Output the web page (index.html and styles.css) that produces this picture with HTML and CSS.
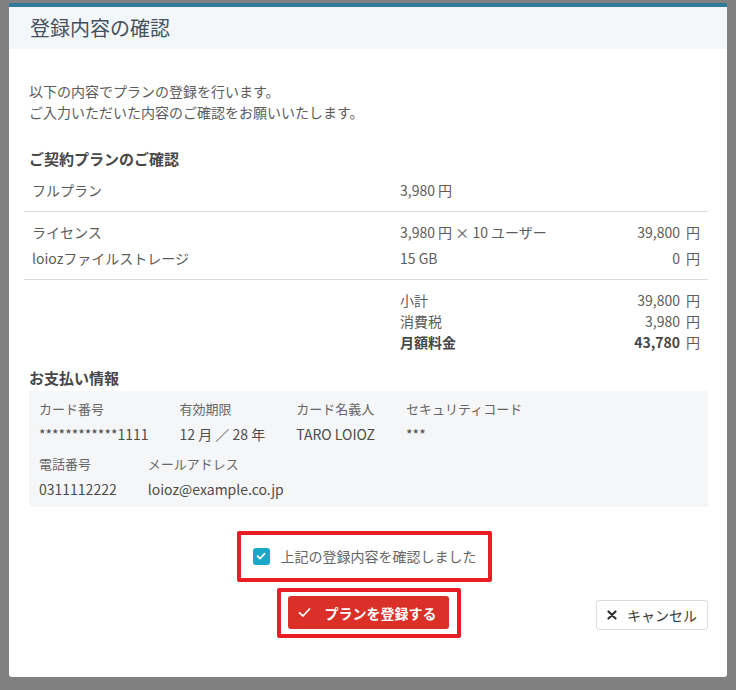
FILE: index.html
```html
<!DOCTYPE html>
<html lang="ja">
<head>
    <meta charset="UTF-8">
    <meta name="viewport" content="width=device-width, initial-scale=1.0">
    <title>登録内容の確認</title>
    <link rel="stylesheet" href="styles.css">
</head>
<body>
    <div class="modal">
        <div class="modal-header">
            <h1 class="modal-title">登録内容の確認</h1>
        </div>
        <div class="modal-body">
            <p class="intro">以下の内容でプランの登録を行います。<br>ご入力いただいた内容のご確認をお願いいたします。</p>

            <h2 class="section-title">ご契約プランのご確認</h2>
            <div class="plan">
                <div class="plan-group">
                    <div class="plan-row"><span>フルプラン</span><span>3,980 円</span><span></span></div>
                </div>
                <div class="plan-group">
                    <div class="plan-row"><span>ライセンス</span><span>3,980 円 × 10 ユーザー</span><span class="amount">39,800<span class="yen">円</span></span></div>
                    <div class="plan-row"><span>loiozファイルストレージ</span><span>15 GB</span><span class="amount">0<span class="yen">円</span></span></div>
                </div>
                <div class="plan-group totals">
                    <div class="plan-row"><span></span><span>小計</span><span class="amount">39,800<span class="yen">円</span></span></div>
                    <div class="plan-row"><span></span><span>消費税</span><span class="amount">3,980<span class="yen">円</span></span></div>
                    <div class="plan-row"><span></span><span class="strong">月額料金</span><span class="amount"><span class="strong">43,780</span><span class="yen">円</span></span></div>
                </div>
            </div>

            <h2 class="section-title">お支払い情報</h2>
            <div class="payment">
                <div class="payment-row">
                    <div class="field">
                        <div class="field-label">カード番号</div>
                        <div class="field-value">************1111</div>
                    </div>
                    <div class="field">
                        <div class="field-label">有効期限</div>
                        <div class="field-value">12 月 ／ 28 年</div>
                    </div>
                    <div class="field">
                        <div class="field-label">カード名義人</div>
                        <div class="field-value">TARO LOIOZ</div>
                    </div>
                    <div class="field">
                        <div class="field-label">セキュリティコード</div>
                        <div class="field-value">***</div>
                    </div>
                </div>
                <div class="payment-row">
                    <div class="field">
                        <div class="field-label">電話番号</div>
                        <div class="field-value">0311112222</div>
                    </div>
                    <div class="field">
                        <div class="field-label">メールアドレス</div>
                        <div class="field-value">loioz@example.co.jp</div>
                    </div>
                </div>
            </div>

            <div class="confirm-wrap">
                <label class="confirm highlight">
                    <span class="checkbox">
                        <svg width="10" height="10" viewBox="0 0 10 10"><polyline points="1.5,5.2 4,7.6 8.6,2.6" fill="none" stroke="#fff" stroke-width="1.8" stroke-linecap="round" stroke-linejoin="round"/></svg>
                    </span>
                    上記の登録内容を確認しました
                </label>
            </div>

            <div class="actions">
                <div class="highlight submit-wrap">
                    <button class="btn btn-primary">
                        <svg width="13" height="13" viewBox="0 0 13 13"><polyline points="1.5,6.8 5,10 11.5,3" fill="none" stroke="#fff" stroke-width="1.8" stroke-linecap="round" stroke-linejoin="round"/></svg>
                        プランを登録する
                    </button>
                </div>
                <button class="btn btn-cancel">
                    <svg width="10" height="10" viewBox="0 0 10 10"><path d="M1.5 1.5 L8.5 8.5 M8.5 1.5 L1.5 8.5" stroke="#333" stroke-width="2.2" stroke-linecap="round"/></svg>
                    キャンセル
                </button>
            </div>
        </div>
    </div>
</body>
</html>
```

FILE: styles.css
```css
body {
    margin: 0;
    height: 690px;
    overflow: hidden;
    background-color: #808080;
    font-family: "Noto Sans CJK JP", "Noto Sans", sans-serif;
    color: #5c5c5c;
    font-size: 14px;
}

.modal {
    margin: 3px 9px 0 9px;
    background-color: #fff;
    border-top: 4px solid #2f7b99;
    border-radius: 0 0 3px 3px;
}

.modal-header {
    background-color: #f3f7fa;
    padding: 7px 21px;
}

.modal-title {
    margin: 0;
    font-size: 20px;
    font-weight: normal;
    line-height: 28px;
    color: #45515d;
}

.modal-body {
    padding: 32px 19px 39px 20px;
}

.intro {
    margin: 0;
    line-height: 21px;
}

.section-title {
    margin: 25px 0 0 0;
    font-size: 15px;
    line-height: 22px;
    font-weight: bold;
    color: #474747;
}

.plan {
    margin-left: -5px;
}

.plan-group {
    padding: 7px 0 8px 0;
    border-bottom: 1px solid #dcdcdc;
}

.plan-group.totals {
    padding: 10px 0 0 0;
    border-bottom: none;
}

.plan-row {
    display: grid;
    grid-template-columns: 368px 1fr auto;
    padding: 0 8px;
    line-height: 26px;
}

.totals .plan-row {
    line-height: 21px;
}

.amount {
    text-align: right;
}

.yen {
    margin-left: 6px;
}

.strong {
    font-weight: bold;
    color: #474747;
}

.section-title + .payment {
    margin-top: 2px;
}

.plan + .section-title {
    margin-top: 14px;
}

.payment {
    background-color: #f5f6f8;
    padding: 8px 10px 7px 10px;
    display: flex;
    flex-direction: column;
    gap: 9px;
}

.payment-row {
    display: flex;
    gap: 31px;
}

.field-label {
    font-size: 13px;
    line-height: 20px;
    color: #666;
}

.field-value {
    margin-top: 4px;
    line-height: 22px;
    color: #4d4d4d;
}

.confirm-wrap {
    display: flex;
    justify-content: center;
    margin-top: 24px;
}

.highlight {
    border: 4px solid #ea1c24;
    border-radius: 2px;
}

.confirm {
    display: flex;
    align-items: center;
    gap: 11px;
    margin-right: 9px;
    padding: 11px 11px 12px 12px;
    line-height: 20px;
    color: #666;
}

.checkbox {
    width: 17px;
    height: 17px;
    border-radius: 3px;
    background-color: #1aa8c8;
    display: flex;
    align-items: center;
    justify-content: center;
}

.actions {
    display: grid;
    grid-template-columns: 1fr auto 1fr;
    align-items: center;
    margin-top: 6px;
}

.submit-wrap {
    grid-column: 2;
    padding: 4px 8px 5px 7px;
}

.btn {
    display: flex;
    align-items: center;
    font-family: inherit;
    font-size: 14px;
    border-radius: 3px;
    cursor: pointer;
}

.btn-primary {
    height: 33px;
    padding: 0 12px 0 10px;
    gap: 14px;
    background-color: #da3028;
    border: none;
    color: #fff;
    font-weight: bold;
}

.btn-cancel {
    grid-column: 3;
    justify-self: end;
    margin-top: 4px;
    height: 30px;
    padding: 0 10px;
    gap: 10px;
    background-color: #fff;
    border: 1px solid #dcdcdc;
    color: #3a3a3a;
}
```
